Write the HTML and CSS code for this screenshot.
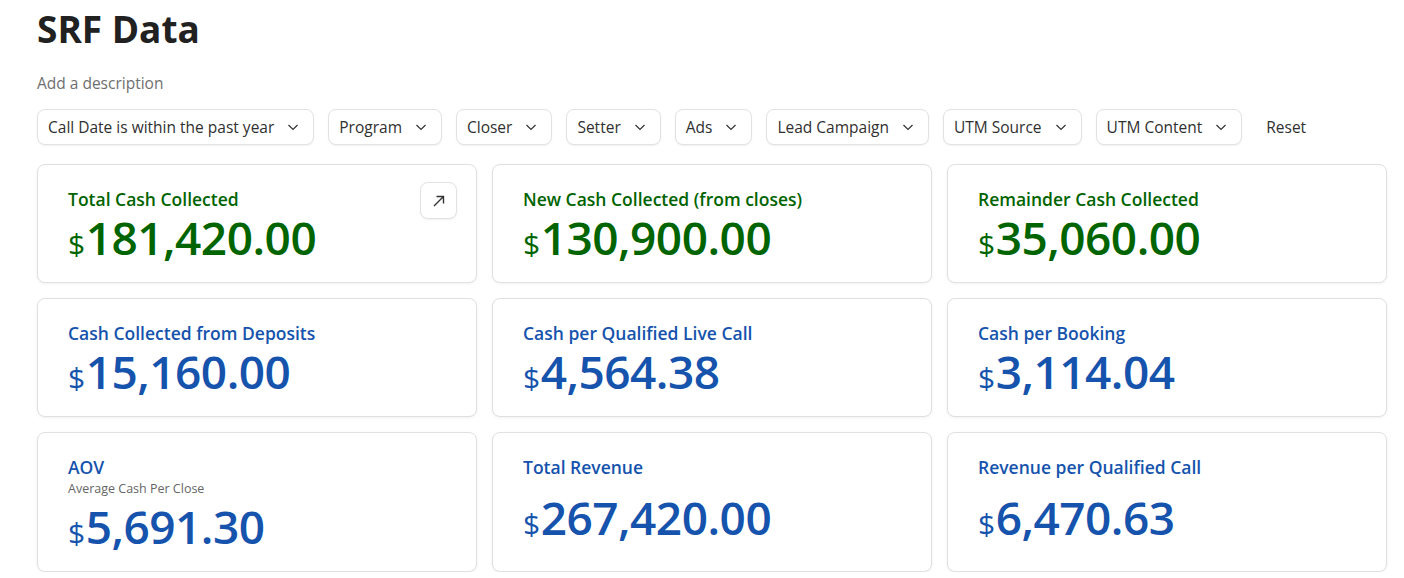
FILE: index.html
```html
<!DOCTYPE html>
<html lang="en">
<head>
    <meta charset="UTF-8">
    <meta name="viewport" content="width=device-width, initial-scale=1.0">
    <title>SRF Data</title>
    <link rel="stylesheet" href="styles.css">
</head>
<body>
    <div class="page">
        <h1 class="page-title">SRF Data</h1>
        <p class="description">Add a description</p>

        <div class="filters">
            <button class="filter">Call Date is within the past year <svg class="chev" viewBox="0 0 12 12"><path d="M1.5 4l4.5 4.5 4.5-4.5"/></svg></button>
            <button class="filter">Program <svg class="chev" viewBox="0 0 12 12"><path d="M1.5 4l4.5 4.5 4.5-4.5"/></svg></button>
            <button class="filter">Closer <svg class="chev" viewBox="0 0 12 12"><path d="M1.5 4l4.5 4.5 4.5-4.5"/></svg></button>
            <button class="filter">Setter <svg class="chev" viewBox="0 0 12 12"><path d="M1.5 4l4.5 4.5 4.5-4.5"/></svg></button>
            <button class="filter">Ads <svg class="chev" viewBox="0 0 12 12"><path d="M1.5 4l4.5 4.5 4.5-4.5"/></svg></button>
            <button class="filter">Lead Campaign <svg class="chev" viewBox="0 0 12 12"><path d="M1.5 4l4.5 4.5 4.5-4.5"/></svg></button>
            <button class="filter">UTM Source <svg class="chev" viewBox="0 0 12 12"><path d="M1.5 4l4.5 4.5 4.5-4.5"/></svg></button>
            <button class="filter">UTM Content <svg class="chev" viewBox="0 0 12 12"><path d="M1.5 4l4.5 4.5 4.5-4.5"/></svg></button>
            <button class="reset">Reset</button>
        </div>

        <div class="cards">
            <div class="card green">
                <button class="expand"><svg viewBox="0 0 16 16"><path d="M3 13L12.5 3.5M5.5 3.5h7v7"/></svg></button>
                <div class="card-title">Total Cash Collected</div>
                <div class="value"><span class="cur">$</span>181,420.00</div>
            </div>
            <div class="card green">
                <div class="card-title">New Cash Collected (from closes)</div>
                <div class="value"><span class="cur">$</span>130,900.00</div>
            </div>
            <div class="card green">
                <div class="card-title">Remainder Cash Collected</div>
                <div class="value"><span class="cur">$</span>35,060.00</div>
            </div>

            <div class="card blue">
                <div class="card-title">Cash Collected from Deposits</div>
                <div class="value"><span class="cur">$</span>15,160.00</div>
            </div>
            <div class="card blue">
                <div class="card-title">Cash per Qualified Live Call</div>
                <div class="value"><span class="cur">$</span>4,564.38</div>
            </div>
            <div class="card blue">
                <div class="card-title">Cash per Booking</div>
                <div class="value"><span class="cur">$</span>3,114.04</div>
            </div>

            <div class="card blue tall">
                <div class="card-title">AOV</div>
                <div class="card-sub">Average Cash Per Close</div>
                <div class="value"><span class="cur">$</span>5,691.30</div>
            </div>
            <div class="card blue tall">
                <div class="card-title">Total Revenue</div>
                <div class="value"><span class="cur">$</span>267,420.00</div>
            </div>
            <div class="card blue tall">
                <div class="card-title">Revenue per Qualified Call</div>
                <div class="value"><span class="cur">$</span>6,470.63</div>
            </div>
        </div>
    </div>
</body>
</html>
```

FILE: styles.css
```css
body {
    margin: 0;
    font-family: "Segoe UI", "Open Sans", "Noto Sans", sans-serif;
    background-color: #fff;
    color: #222;
}
.page {
    padding: 5px 17px 0 37px;
}
.page-title {
    margin: 0;
    font-size: 37px;
    font-weight: 700;
    color: #212121;
    line-height: 48px;
}
.description {
    margin: 20px 0 0;
    font-size: 15.5px;
    color: #6f6f6f;
    line-height: 20px;
}
.filters {
    display: flex;
    align-items: center;
    gap: 14px;
    margin-top: 16px;
}
.filter {
    display: flex;
    align-items: center;
    gap: 13px;
    height: 36px;
    padding: 0 14px 0 10px;
    background: #fff;
    border: 1px solid #e2e2e2;
    border-radius: 8px;
    box-shadow: 0 1px 2px rgba(0, 0, 0, 0.06);
    font-family: inherit;
    font-size: 15.5px;
    color: #303030;
}
.chev {
    width: 12px;
    height: 12px;
    fill: none;
    stroke: #333;
    stroke-width: 1.2;
}
.reset {
    background: none;
    border: none;
    font-family: inherit;
    font-size: 15.5px;
    color: #303030;
    padding: 0 10px;
}
.cards {
    display: grid;
    grid-template-columns: repeat(3, 1fr);
    gap: 15px;
    margin-top: 19px;
}
.card {
    position: relative;
    height: 119px;
    box-sizing: border-box;
    padding: 23px 30px 0;
    border: 1px solid #e0e0e0;
    border-radius: 8px;
    box-shadow: 0 1px 3px rgba(0, 0, 0, 0.06);
    background: #fff;
}
.card.tall {
    height: 140px;
}
.card-title {
    font-size: 17.5px;
    font-weight: 600;
    line-height: 22px;
}
.card-sub {
    font-size: 12.5px;
    color: #666;
    line-height: 16px;
    margin-top: 3px;
}
.value {
    font-size: 46px;
    font-weight: 600;
    line-height: 54px;
    letter-spacing: -0.5px;
}
.tall .value {
    margin-top: 12px;
}
.tall .card-sub + .value {
    margin-top: 2px;
}
.cur {
    font-size: 30px;
    font-weight: 400;
    margin-right: 1px;
}
.green {
    color: #006400;
}
.blue {
    color: #1553ad;
}
.expand {
    position: absolute;
    top: 17px;
    right: 19px;
    width: 37px;
    height: 37px;
    display: flex;
    align-items: center;
    justify-content: center;
    background: #fff;
    border: 1px solid #e2e2e2;
    border-radius: 8px;
    box-shadow: 0 1px 2px rgba(0, 0, 0, 0.06);
    padding: 0;
}
.expand svg {
    width: 16px;
    height: 16px;
    fill: none;
    stroke: #333;
    stroke-width: 1.4;
}
```
